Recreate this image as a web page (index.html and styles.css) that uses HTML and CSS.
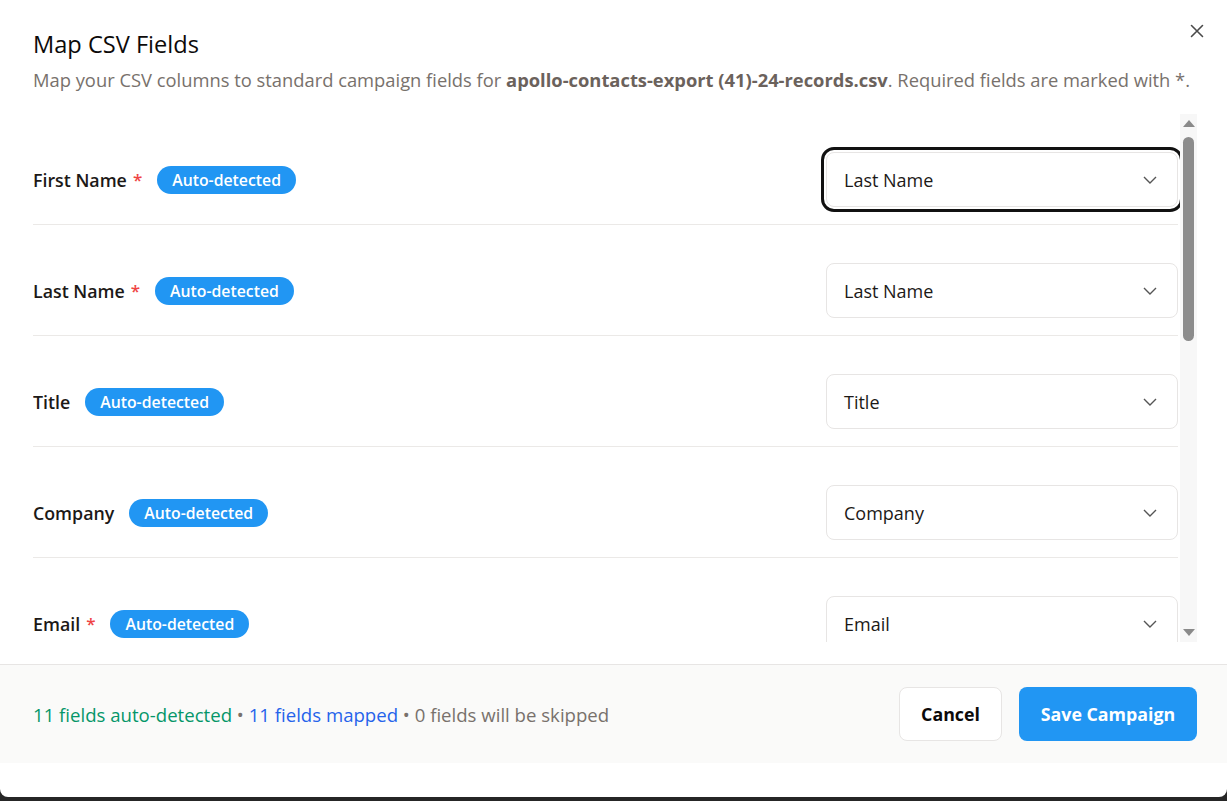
FILE: index.html
```html
<!DOCTYPE html>
<html lang="en">
<head>
<meta charset="utf-8">
<title>Map CSV Fields</title>
<link rel="stylesheet" href="styles.css">
</head>
<body>
<div class="modal">
  <header class="modal-header">
    <h1 class="title">Map CSV Fields</h1>
    <p class="subtitle">Map your CSV columns to standard campaign fields for <strong>apollo-contacts-export (41)-24-records.csv</strong>. Required fields are marked with *.</p>
    <button class="close" aria-label="Close">
      <svg width="14" height="14" viewBox="0 0 14 14"><path d="M1.5 1.5 L12.5 12.5 M12.5 1.5 L1.5 12.5" stroke="#4a4a4a" stroke-width="1.6" stroke-linecap="round"/></svg>
    </button>
  </header>

  <div class="body">
    <div class="list">
      <div class="row">
        <div class="field"><span class="label">First Name</span><span class="req">*</span><span class="badge">Auto-detected</span></div>
        <div class="select focused"><span>Last Name</span><svg class="chev" width="16" height="10" viewBox="0 0 16 10"><path d="M2 2 L8 8 L14 2" fill="none" stroke="#555" stroke-width="1.4"/></svg></div>
      </div>
      <div class="row">
        <div class="field"><span class="label">Last Name</span><span class="req">*</span><span class="badge">Auto-detected</span></div>
        <div class="select"><span>Last Name</span><svg class="chev" width="16" height="10" viewBox="0 0 16 10"><path d="M2 2 L8 8 L14 2" fill="none" stroke="#555" stroke-width="1.4"/></svg></div>
      </div>
      <div class="row">
        <div class="field"><span class="label">Title</span><span class="badge">Auto-detected</span></div>
        <div class="select"><span>Title</span><svg class="chev" width="16" height="10" viewBox="0 0 16 10"><path d="M2 2 L8 8 L14 2" fill="none" stroke="#555" stroke-width="1.4"/></svg></div>
      </div>
      <div class="row">
        <div class="field"><span class="label">Company</span><span class="badge">Auto-detected</span></div>
        <div class="select"><span>Company</span><svg class="chev" width="16" height="10" viewBox="0 0 16 10"><path d="M2 2 L8 8 L14 2" fill="none" stroke="#555" stroke-width="1.4"/></svg></div>
      </div>
      <div class="row">
        <div class="field"><span class="label">Email</span><span class="req">*</span><span class="badge">Auto-detected</span></div>
        <div class="select"><span>Email</span><svg class="chev" width="16" height="10" viewBox="0 0 16 10"><path d="M2 2 L8 8 L14 2" fill="none" stroke="#555" stroke-width="1.4"/></svg></div>
      </div>
    </div>
    <div class="scrollbar">
      <span class="arrow up"></span>
      <div class="track"><div class="thumb"></div></div>
      <span class="arrow down"></span>
    </div>
  </div>

  <footer class="footer">
    <p class="summary"><span class="green">11 fields auto-detected</span> • <span class="blue">11 fields mapped</span> • 0 fields will be skipped</p>
    <div class="actions">
      <button class="btn btn-cancel">Cancel</button>
      <button class="btn btn-save">Save Campaign</button>
    </div>
  </footer>
</div>
</body>
</html>
```

FILE: styles.css
```css
* { box-sizing: border-box; }
html, body { margin: 0; padding: 0; }
body {
  background: #262626;
  font-family: "Open Sans", "Noto Sans", sans-serif;
  color: #1c1917;
  height: 801px;
  overflow: hidden;
}
.modal {
  background: #fff;
  height: 797px;
  border-radius: 0 0 8px 8px;
  display: flex;
  flex-direction: column;
  padding-bottom: 34px;
}
.modal-header {
  position: relative;
  padding: 28px 0 0 33px;
  height: 114px;
}
.title {
  margin: 0;
  font-size: 23.6px;
  font-weight: 500;
  line-height: 32px;
  color: #0c0a09;
}
.subtitle {
  margin: 8px 0 0;
  font-size: 18.35px;
  line-height: 24px;
  color: #78716c;
  white-space: nowrap;
}
.subtitle strong { color: #6b625c; font-weight: 700; }
.close {
  position: absolute;
  top: 19px;
  right: 18px;
  border: 0;
  background: none;
  padding: 0;
  width: 24px;
  height: 24px;
  display: flex;
  align-items: center;
  justify-content: center;
}
.body {
  display: flex;
  height: 528px;
  padding-left: 33px;
  padding-right: 30px;
}
.list {
  flex: 1;
  overflow: hidden;
  padding-right: 2px;
}
.row {
  display: flex;
  align-items: center;
  justify-content: space-between;
  padding: 38px 0 17px;
  border-bottom: 1px solid #ebe9e7;
}
.field { display: flex; align-items: center; }
.label { font-size: 17.8px; font-weight: 600; color: #1c1917; }
.req { color: #ef4444; font-size: 17px; margin-left: 6px; font-weight: 600; }
.badge {
  margin-left: 15px;
  background: #2196f3;
  color: #fff;
  font-size: 15.8px;
  font-weight: 600;
  height: 28px;
  line-height: 28px;
  padding: 0 15px;
  border-radius: 14px;
}
.select {
  width: 352px;
  height: 55px;
  border: 1px solid #e7e5e4;
  border-radius: 8px;
  display: flex;
  align-items: center;
  justify-content: space-between;
  padding: 0 19px 0 17px;
  font-size: 18px;
  color: #1c1917;
  background: #fff;
}
.select.focused {
  outline: 3px solid #111;
  outline-offset: 2px;
}
.chev { display: block; }
.scrollbar {
  width: 17px;
  background: #f7f7f7;
  display: flex;
  flex-direction: column;
  align-items: center;
  padding: 6px 0;
}
.arrow {
  width: 0;
  height: 0;
  border-left: 6px solid transparent;
  border-right: 6px solid transparent;
}
.arrow.up { border-bottom: 7px solid #8a8a8a; }
.arrow.down { border-top: 7px solid #8a8a8a; }
.track { flex: 1; width: 100%; display: flex; justify-content: center; padding-top: 10px; }
.thumb {
  width: 11px;
  height: 204px;
  border-radius: 6px;
  background: #8c8c8c;
}
.footer {
  margin-top: 22px;
  border-top: 1px solid #e7e5e4;
  background: #fafaf9;
  height: 99px;
  display: flex;
  align-items: center;
  justify-content: space-between;
  padding: 0 30px 0 33px;
}
.summary {
  margin: 0;
  font-size: 18.6px;
  font-weight: 500;
  color: #78716c;
}
.green { color: #059669; }
.blue { color: #2563eb; }
.actions { display: flex; gap: 17px; }
.btn {
  height: 54px;
  border-radius: 8px;
  font-family: inherit;
  font-size: 17.8px;
  font-weight: 700;
  padding: 0 10px;
}
.btn-cancel {
  background: #fff;
  border: 1px solid #e7e5e4;
  color: #0c0a09;
  width: 103px;
}
.btn-save {
  background: #2196f3;
  border: 0;
  color: #fff;
  width: 178px;
}
```
